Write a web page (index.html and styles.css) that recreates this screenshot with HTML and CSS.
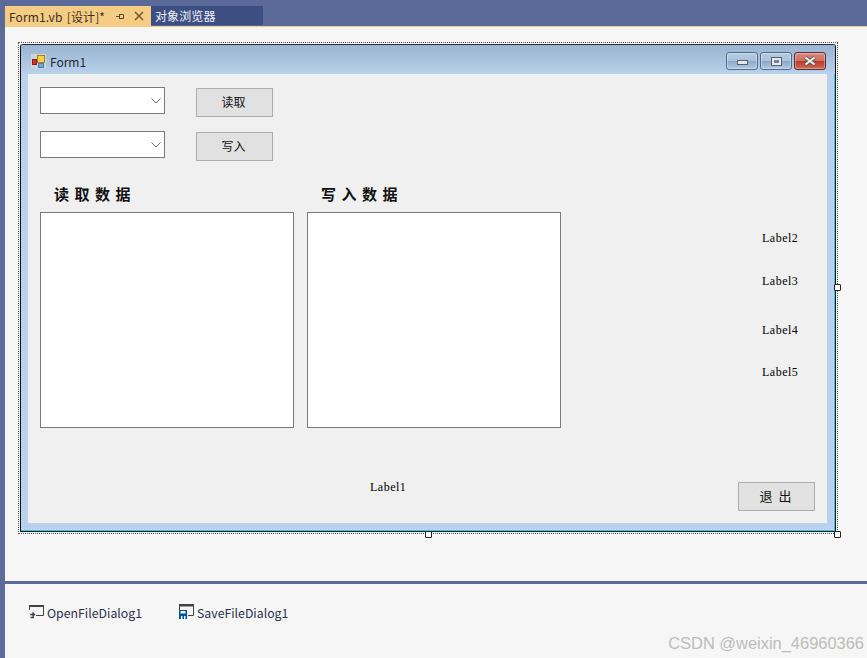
FILE: index.html
```html
<!DOCTYPE html>
<html lang="zh">
<head>
<meta charset="utf-8">
<title>Form1.vb [设计]</title>
<link rel="stylesheet" href="styles.css">
</head>
<body>
<div class="ide">
  <div class="tabstrip">
    <div class="tab active">
      <span class="tab-title">Form1.vb [设计]*</span>
      <svg class="tab-pin" width="10" height="10" viewBox="0 0 10 10"><path d="M1 5.500H4M4.500 3V8M4.500 3.500H8.500V7.500H4.500" fill="none" stroke="#5a4a20"/></svg>
      <svg class="tab-close" width="10" height="10" viewBox="0 0 10 10"><path d="M1 1L9 9M9 1L1 9" fill="none" stroke="#6a5428" stroke-width="1.400"/></svg>
    </div>
    <div class="tab inactive">对象浏览器</div>
  </div>
  <div class="surface">
    <div class="selection">
      <span class="handle h-right"></span>
      <span class="handle h-bottom"></span>
      <span class="handle h-corner"></span>
      <div class="window">
        <div class="titlebar">
          <svg class="form-icon" width="15" height="15" viewBox="0 0 15 15">
            <rect x="0" y="0" width="15" height="15" fill="#d0d4d8"/>
            <rect x="6.500" y="1.500" width="7" height="7" fill="#f5cf4a" stroke="#a8801c"/>
            <rect x="1.500" y="5.500" width="4" height="5" fill="#d8322a" stroke="#8a1a16"/>
            <rect x="7.500" y="9.500" width="5" height="4" fill="#6da4e6" stroke="#4a78b8"/>
          </svg>
          <span class="form-title">Form1</span>
          <div class="caption-buttons">
            <span class="cap"><span class="glyph-min"></span></span>
            <span class="cap"><span class="glyph-max"></span></span>
            <span class="cap close">
              <svg width="16" height="10" viewBox="0 0 16 10"><path d="M3.500 1.500L12.500 8.500M12.500 1.500L3.500 8.500" fill="none" stroke="#555" stroke-width="3.600"/><path d="M3.500 1.500L12.500 8.500M12.500 1.500L3.500 8.500" fill="none" stroke="#f2f2f2" stroke-width="2.200"/></svg>
            </span>
          </div>
        </div>
        <div class="client">
          <div class="combo c1"><svg width="10" height="6" viewBox="0 0 10 6"><path d="M.5 .5L5 5L9.500 .5" fill="none" stroke="#666"/></svg></div>
          <div class="combo c2"><svg width="10" height="6" viewBox="0 0 10 6"><path d="M.5 .5L5 5L9.500 .5" fill="none" stroke="#666"/></svg></div>
          <div class="btn b1">读取</div>
          <div class="btn b2">写入</div>
          <div class="heading h1">读取数据</div>
          <div class="heading h2">写入数据</div>
          <div class="listbox l1"></div>
          <div class="listbox l2"></div>
          <div class="label la2">Label2</div>
          <div class="label la3">Label3</div>
          <div class="label la4">Label4</div>
          <div class="label la5">Label5</div>
          <div class="label la1">Label1</div>
          <div class="btn b3">退 出</div>
        </div>
      </div>
    </div>
  </div>
  <div class="tray">
    <div class="tray-item">
      <svg width="15" height="15" viewBox="0 0 15 15"><path d="M.5 6V1.500H14.500V11.500H7" fill="none" stroke="#424242"/><rect x="0" y="1" width="15" height="2" fill="#424242"/><path d="M1 10.500H5M3.500 8.500L5.500 10.500L3.500 12.500M5 13.500H1.500" fill="none" stroke="#424242" stroke-width="1.300"/></svg>
      <span>OpenFileDialog1</span>
    </div>
    <div class="tray-item">
      <svg width="15" height="15" viewBox="0 0 15 15"><path d="M.5 6V.5H14.500V11.500H9" fill="none" stroke="#424242"/><rect x="0" y="0" width="15" height="2.500" fill="#424242"/><rect x="0" y="6" width="8" height="9" fill="#00539c"/><rect x="1.500" y="7" width="5" height="2.500" fill="#f6f6f6"/><rect x="2" y="12" width="1.500" height="3" fill="#f6f6f6"/><rect x="5" y="12" width="1.500" height="3" fill="#f6f6f6"/></svg>
      <span>SaveFileDialog1</span>
    </div>
  </div>
  <div class="watermark">CSDN @weixin_46960366</div>
</div>
</body>
</html>
```
FILE: styles.css
```css
* { box-sizing: border-box; }
html, body { margin: 0; padding: 0; }
body { width: 867px; height: 658px; overflow: hidden; font-family: "Noto Sans CJK SC", "Noto Sans", sans-serif; }

.ide {
  position: relative;
  width: 867px;
  height: 658px;
  background: #5c6a9a;
  padding-left: 5px;
  display: flex;
  flex-direction: column;
}

.tabstrip {
  height: 27px;
  padding-top: 6px;
  display: flex;
  align-items: flex-start;
  border-bottom: 1px solid #f5cc84;
}
.tab { display: flex; align-items: center; font-size: 12px; }
.tab.active { width: 146px; height: 20px; background: #f5cc84; color: #3a3020; padding-left: 4px; }
.tab-title { width: 106px; white-space: nowrap; letter-spacing: .1px; word-spacing: 1.500px; }
.tab-pin { margin-right: 9px; }
.tab.inactive { width: 112px; height: 19px; background: #3d4f82; color: #f0f2f8; padding-left: 4px; letter-spacing: .1px; }

.surface { height: 554px; background: #f6f6f6; padding: 15px 0 0 13px; }

.selection {
  position: relative;
  width: 820px;
  height: 492px;
  border: 1px dotted #555;
  padding: 1px;
}
.handle { position: absolute; width: 7px; height: 7px; background: #fff; border: 1px solid #222; border-radius: 1px; z-index: 2; }
.h-right { right: -4px; top: 241px; }
.h-bottom { left: 406px; bottom: -5px; }
.h-corner { right: -4px; bottom: -5px; }

.window {
  width: 816px;
  height: 488px;
  border: 1px solid #111;
  border-top-color: #2b2b2b;
  border-radius: 3px 3px 0 0;
  background: #b9d1ea;
  box-shadow: inset -1px -1px 0 #29d3ee;
  display: flex;
  flex-direction: column;
  padding: 0 7px 7px;
}
.titlebar {
  height: 29px;
  margin: 0 -7px 0;
  padding: 4px 9px 0 10px;
  display: flex;
  align-items: center;
  border-radius: 2px 2px 0 0;
  background: linear-gradient(#99b4d1, #b9d1ea);
  flex: none;
}
.form-icon { margin-right: 3px; width: 15px; height: 15px; }
.form-title { font-size: 12px; color: #1d2733; margin-left: 1px; }
.caption-buttons { margin-left: auto; display: flex; gap: 2px; margin-top: -1px; }
.cap {
  width: 32px;
  height: 18px;
  border: 1px solid #54688a;
  border-radius: 3px;
  background: linear-gradient(#b4cbe2 0, #a9c2dc 48%, #8aa6c4 50%, #b1cae3 100%);
  box-shadow: inset 0 0 0 1px rgba(255,255,255,.35);
  display: flex;
  align-items: center;
  justify-content: center;
}
.cap.close {
  border-color: #5a2a2e;
  background: linear-gradient(#d98a7e 0, #d0705f 48%, #b33b28 50%, #cf6a52 100%);
}
.glyph-min { width: 11px; height: 5px; margin-top: 3px; background: #e8e8e8; border: 1px solid #55606e; }
.glyph-max { width: 11px; height: 9px; background: #e8e8e8; border: 1px solid #55606e; box-shadow: inset 0 0 0 2px #e8e8e8, inset 0 0 0 4px #6d83a3; }

.client {
  position: relative;
  width: 799px;
  height: 449px;
  background: #f0f0f0;
  flex: none;
}
.combo {
  position: absolute;
  left: 12px;
  width: 125px;
  height: 27px;
  background: #fff;
  border: 1px solid #7a7a7a;
  display: flex;
  align-items: center;
  justify-content: flex-end;
  padding-right: 3px;
}
.c1 { top: 13px; }
.c2 { top: 57px; }
.btn {
  position: absolute;
  width: 77px;
  height: 29px;
  background: #e1e1e1;
  border: 1px solid #adadad;
  font-size: 12px;
  color: #111;
  display: flex;
  align-items: center;
  justify-content: center;
  padding: 0 2px 2px 0;
}
.b1 { left: 168px; top: 14px; }
.b2 { left: 168px; top: 58px; }
.b3 { left: 710px; top: 408px; font-size: 13px; word-spacing: 3px; }
.heading {
  position: absolute;
  top: 109px;
  font-size: 15px;
  line-height: 22px;
  font-weight: 700;
  letter-spacing: 5.500px;
  color: #111;
  white-space: nowrap;
}
.h1 { left: 26px; }
.h2 { left: 293px; }
.listbox {
  position: absolute;
  top: 138px;
  width: 254px;
  height: 216px;
  background: #fff;
  border: 1px solid #7a7a7a;
}
.l1 { left: 12px; }
.l2 { left: 279px; }
.label {
  position: absolute;
  font-family: "Liberation Serif", "Liberation Mono", serif;
  font-size: 12px;
  letter-spacing: .5px;
  line-height: 12px;
  color: #000;
  white-space: nowrap;
}
.la2 { left: 734px; top: 158px; }
.la3 { left: 734px; top: 201px; }
.la4 { left: 734px; top: 250px; }
.la5 { left: 734px; top: 292px; }
.la1 { left: 342px; top: 407px; }

.tray {
  flex: 1;
  border-top: 3px solid #5c6a9a;
  background: #f6f6f6;
  padding: 19px 0 0 24px;
  display: flex;
  gap: 37px;
  align-items: flex-start;
}
.tray-item { display: flex; align-items: flex-start; gap: 3px; font-size: 12.300px; line-height: 18px; color: #2a3050; white-space: nowrap; }
.tray-item svg { margin-top: 1px; }
.tray-item span { margin-top: 1px; }

.watermark {
  position: absolute;
  right: 3px;
  bottom: 5px;
  font-family: "Liberation Sans", sans-serif;
  font-size: 16.450px;
  line-height: 20px;
  color: #bcbcbc;
  white-space: nowrap;
}
```
